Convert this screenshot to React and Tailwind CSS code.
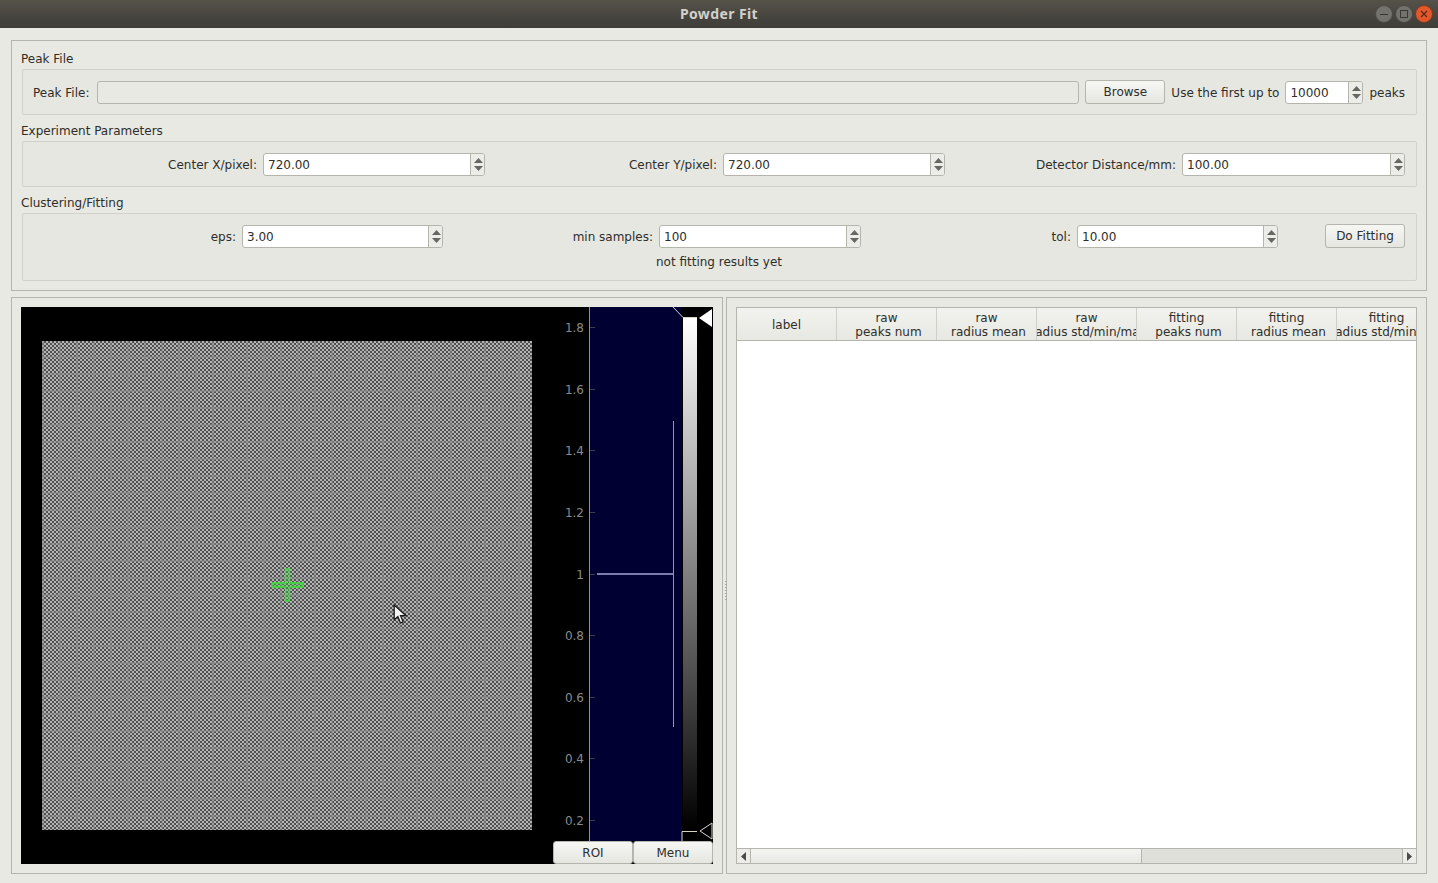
const font = { fontFamily: '"DejaVu Sans", sans-serif' }

const ticks = [
  ['1.8', 327], ['1.6', 389], ['1.4', 450], ['1.2', 512], ['1', 574],
  ['0.8', 635], ['0.6', 697], ['0.4', 758], ['0.2', 820],
]

const headers = [
  ['label'],
  ['raw', 'peaks num'],
  ['raw', 'radius mean'],
  ['raw', 'radius std/min/max'],
  ['fitting', 'peaks num'],
  ['fitting', 'radius mean'],
  ['fitting', 'radius std/min/max'],
]

function Arrows() {
  return (
    <div className="w-[14px] shrink-0 border-l border-[#b5b5ae] bg-[#ecece8] pl-[1px] flex flex-col items-center justify-center gap-[3px]">
      <svg width="9" height="5" viewBox="0 0 9 5"><path d="M4.5 0 L9 5 L0 5 Z" fill="#666662" /></svg>
      <svg width="9" height="5" viewBox="0 0 9 5"><path d="M0 0 L9 0 L4.5 5 Z" fill="#666662" /></svg>
    </div>
  )
}

function Spin({ value, className }) {
  return (
    <div className={`h-[23px] flex bg-white border border-[#b5b5ae] rounded-[3px] overflow-hidden ${className}`}>
      <div className="flex-1 pl-[4px] pt-[1px] leading-[21px] text-[12px] text-[#2e2e2a]">{value}</div>
      <Arrows />
    </div>
  )
}

function Button({ children, className }) {
  return (
    <div className={`h-[24px] flex items-center justify-center border border-[#b5b5ae] rounded-[3px] bg-gradient-to-b from-[#f6f6f3] to-[#e6e6e1] text-[12px] text-[#2e2e2a] ${className}`}>
      {children}
    </div>
  )
}

function Labeled({ label, children }) {
  return (
    <div className="flex items-center justify-end gap-[6px]">
      <span className="pt-[1px] text-[12px] text-[#2e2e2a] whitespace-nowrap">{label}</span>
      {children}
    </div>
  )
}

function SectionTitle({ children }) {
  return <div className="h-[22px] -ml-px pt-[1px] flex items-center text-[12px] text-[#2e2e2a]">{children}</div>
}

function TitleBar() {
  return (
    <div className="h-[28px] shrink-0 relative flex items-center justify-center pb-[1px] bg-gradient-to-b from-[#55524a] to-[#3d3c37]">
      <span className="text-[14px] font-bold tracking-[0.4px] text-[#d3d1ca]" style={{ fontFamily: '"Noto Sans", sans-serif' }}>Powder Fit</span>
      <div className="absolute right-[5px] top-[5px] flex gap-[2px]">
        <div className="w-[18px] h-[18px] rounded-full bg-[#73726c] border border-[#4a4944] flex items-center justify-center">
          <div className="w-[8px] h-[1px] bg-[#3a3934]" />
        </div>
        <div className="w-[18px] h-[18px] rounded-full bg-[#73726c] border border-[#4a4944] flex items-center justify-center">
          <div className="w-[8px] h-[8px] border border-[#3a3934]" />
        </div>
        <div className="w-[18px] h-[18px] rounded-full bg-[#e2582b] border border-[#7a3a20] flex items-center justify-center">
          <svg width="8" height="8" viewBox="0 0 8 8"><path d="M1 1 L7 7 M7 1 L1 7" stroke="#5a2a18" strokeWidth="1.2" /></svg>
        </div>
      </div>
    </div>
  )
}

function TopPanel() {
  return (
    <div className="h-[251px] mx-[11px] mt-[12px] border border-[#b5b5ae] pl-[10px] pr-[9px] pt-[6px] shrink-0">
      <SectionTitle>Peak File</SectionTitle>
      <div className="h-[46px] border border-[#d2d2cb] rounded-[2px] bg-[#e7e7e1] pl-[10px] pr-[11px] flex items-center gap-[6px]">
        <span className="pt-[1px] text-[12px] text-[#2e2e2a] whitespace-nowrap">Peak File:</span>
        <div className="h-[23px] flex-1 ml-[2px] border border-[#b5b5ae] rounded-[3px] bg-[#e9e9e4]" />
        <Button className="w-[80px]">Browse</Button>
        <span className="pt-[1px] text-[12px] text-[#2e2e2a] whitespace-nowrap">Use the first up to</span>
        <Spin value="10000" className="w-[78px]" />
        <span className="pt-[1px] text-[12px] text-[#2e2e2a]">peaks</span>
      </div>

      <div className="mt-[4px]"><SectionTitle>Experiment Parameters</SectionTitle></div>
      <div className="h-[46px] border border-[#d2d2cb] rounded-[2px] bg-[#e7e7e1] pl-[2px] pr-[11px] grid grid-cols-3 items-center">
        <Labeled label="Center X/pixel:"><Spin value="720.00" className="w-[222px]" /></Labeled>
        <Labeled label="Center Y/pixel:"><Spin value="720.00" className="w-[222px]" /></Labeled>
        <Labeled label="Detector Distance/mm:"><Spin value="100.00" className="w-[223px]" /></Labeled>
      </div>

      <div className="mt-[4px]"><SectionTitle>Clustering/Fitting</SectionTitle></div>
      <div className="h-[68px] border border-[#d2d2cb] rounded-[2px] bg-[#e7e7e1] pl-[2px] pr-[11px] pt-[10px]">
        <div className="grid grid-cols-[418px_418px_417px_1fr] items-center">
          <Labeled label="eps:"><Spin value="3.00" className="w-[201px]" /></Labeled>
          <Labeled label="min samples:"><Spin value="100" className="w-[202px]" /></Labeled>
          <Labeled label="tol:"><Spin value="10.00" className="w-[201px]" /></Labeled>
          <Button className="w-[80px] justify-self-end">Do Fitting</Button>
        </div>
        <div className="mt-[5px] pl-[8px] text-center text-[12px] text-[#2e2e2a] leading-[18px]">not fitting results yet</div>
      </div>
    </div>
  )
}

function Cursor() {
  return (
    <svg className="absolute left-[372px] top-[297px]" width="15" height="21" viewBox="0 0 14 20">
      <path d="M1 1 L1 15 L4.5 12 L7 18 L9.5 17 L7 11 L12 11 Z" fill="#f4f4f4" stroke="#1a1a1a" strokeWidth="1.2" />
    </svg>
  )
}

function Cross() {
  return (
    <svg className="absolute left-[250px] top-[261px]" width="33" height="34" viewBox="0 0 33 34">
      <path d="M14.5 1 H18.5 V15 H32 V19 H18.5 V33 H14.5 V19 H1 V15 H14.5 Z" fill="#38e038" fillOpacity="0.3" stroke="#38e038" strokeWidth="1.4" />
    </svg>
  )
}

// histogram + gradient editor, coordinates are relative to its own box
function Histogram() {
  return (
    <svg width="160" height="534" viewBox="0 0 160 534" className="block" style={font}>
      <defs>
        <linearGradient id="lut" x1="0" y1="0" x2="0" y2="1">
          <stop offset="0" stopColor="#ffffff" />
          <stop offset="1" stopColor="#000000" />
        </linearGradient>
      </defs>
      <rect x="37" y="0" width="92" height="534" fill="#000033" />
      <line x1="36.5" y1="0" x2="36.5" y2="534" stroke="#8f8f96" />
      {ticks.map(([t, y]) => (
        <g key={t}>
          <text x="31" y={y - 307 + 5} textAnchor="end" fontSize="12" fill="#8a8a8a">{t}</text>
          <line x1="37" x2="42" y1={y - 307 + 0.5} y2={y - 307 + 0.5} stroke="#3c3c52" />
        </g>
      ))}
      <path d="M44 267 H120" stroke="#a9a5d8" strokeWidth="1.6" fill="none" />
      <path d="M120.5 114 V420" stroke="#9490cc" fill="none" />
      <rect x="130" y="11" width="14" height="512" fill="url(#lut)" />
      <path d="M120 0 L130 10.5 H144" stroke="#d8d4c0" fill="none" />
      <path d="M129 534 V524.5 H144" stroke="#d8d4c0" fill="none" />
      <path d="M159 2 V20 L146 11 Z" fill="#ffffff" />
      <path d="M159 516 V532 L147 524 Z" fill="#000000" stroke="#d8d8d0" />
    </svg>
  )
}

function PlotPanel() {
  return (
    <div className="w-[712px] border border-[#b5b5ae] p-[9px] shrink-0">
      <div className="h-[557px] bg-black flex">
        <div className="w-[532px] pl-[21px] pt-[34px] relative">
          <div className="w-[490px] h-[489px] [background-image:linear-gradient(90deg,#8a8a8a80_0_2px,transparent_2px),linear-gradient(0deg,#8a8a8a80_0_2px,transparent_2px),repeating-conic-gradient(#505050_0_25%,#b4b4b4_0_50%)] [background-size:17px_17px,17px_17px,4px_4px]" />
          <Cross />
          <Cursor />
        </div>
        <div className="w-[160px] flex flex-col">
          <Histogram />
          <div className="h-[23px] flex">
            <Button className="w-[80px] !h-[23px]">ROI</Button>
            <Button className="w-[80px] !h-[23px]">Menu</Button>
          </div>
        </div>
      </div>
    </div>
  )
}

function TablePanel() {
  return (
    <div className="flex-1 min-w-0 border border-[#b5b5ae] p-[9px]">
      <div className="h-[557px] border border-[#b5b5ae] border-b-0 flex flex-col bg-white overflow-hidden">
        <div className="h-[33px] flex shrink-0 border-b border-[#b5b5ae]">
          {headers.map((h, i) => (
            <div key={i} className="w-[100px] shrink-0 overflow-hidden border-r border-[#cfcfc8] bg-gradient-to-b from-[#f2f2ee] to-[#e8e8e3] flex flex-col items-center justify-center pt-[1px] text-[12px] leading-[14px] text-[#2e2e2a]">
              {h.map((line, j) => (
                <span key={line} className={j === 1 ? 'whitespace-nowrap ml-[4px]' : 'whitespace-nowrap'}>{line}</span>
              ))}
            </div>
          ))}
        </div>
        <div className="flex-1" />
        <div className="h-[16px] flex shrink-0 border-t border-b border-[#b5b5ae] bg-[#e0e0da]">
          <div className="w-[14px] flex items-center justify-center border-r border-[#b5b5ae] bg-[#ecece8]">
            <svg width="5" height="9" viewBox="0 0 5 9"><path d="M5 0 V9 L0 4.5 Z" fill="#4a4a46" /></svg>
          </div>
          <div className="w-[391px] border-r border-[#b5b5ae] bg-gradient-to-b from-[#f4f4f1] to-[#e8e8e3]" />
          <div className="flex-1" />
          <div className="w-[14px] flex items-center justify-center border-l border-[#b5b5ae] bg-[#ecece8]">
            <svg width="5" height="9" viewBox="0 0 5 9"><path d="M0 0 V9 L5 4.5 Z" fill="#4a4a46" /></svg>
          </div>
        </div>
      </div>
    </div>
  )
}

export default function App() {
  return (
    <div className="w-[1438px] h-[883px] flex flex-col bg-[#e9e9e3] overflow-hidden" style={font}>
      <TitleBar />
      <TopPanel />
      <div className="flex mx-[11px] mt-[6px] gap-[3px] relative">
        <PlotPanel />
        <TablePanel />
        <div className="absolute left-[714px] top-[284px] flex flex-col gap-[2px]">
          {[0, 1, 2, 3, 4, 5, 6].map((n) => <div key={n} className="w-[2px] h-[1px] bg-[#a8a8a2]" />)}
        </div>
      </div>
    </div>
  )
}
